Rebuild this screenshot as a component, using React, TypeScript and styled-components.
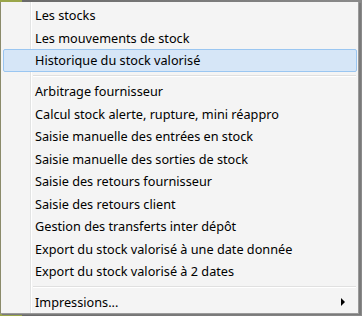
import React from 'react';
import styled, { createGlobalStyle } from 'styled-components';

const GlobalStyle = createGlobalStyle`
  html, body {
    margin: 0;
    padding: 0;
  }

  body {
    width: 362px;
    height: 316px;
    overflow: hidden;
    background: linear-gradient(to right, #9aa64a 0, #9aa64a 22px, #6a6a6a 22px, #8a8a8a 100%);
    font-family: "Noto Sans", "Open Sans", sans-serif;
  }
`;

const Backdrop = styled.div`
  padding: 2px 0 0 0;
  height: 316px;
  box-sizing: border-box;
`;

const Menu = styled.div`
  position: relative;
  width: 359px;
  height: 312px;
  box-sizing: border-box;
  background: #f4f4f4;
  border-left: 1px solid #8a8a6a;
  border-right: 1px solid #9a9a9a;
  border-bottom: 1px solid #9a9a9a;
  padding: 2px 1px 0 2px;
  box-shadow: 2px 1px 0 #7a7a7a;

  &::before {
    content: '';
    position: absolute;
    top: 0;
    bottom: 0;
    left: 29px;
    width: 1px;
    background: #e2e3e3;
    border-right: 1px solid #ffffff;
  }
`;

const Item = styled.div<{ $active?: boolean }>`
  position: relative;
  height: 22.5px;
  display: flex;
  align-items: center;
  box-sizing: border-box;
  padding-left: 31px;
  font-size: 12.7px;
  color: #000;
  white-space: nowrap;
  border: 1px solid ${(p) => (p.$active ? '#9ac6f1' : 'transparent')};
  border-radius: 2px;
  background: ${(p) => (p.$active ? '#d6e6f7' : 'transparent')};
  z-index: 1;
`;

const Separator = styled.div`
  height: 8.5px;
  display: flex;
  align-items: center;
  padding-left: 30px;
  padding-right: 1px;

  &::after {
    content: '';
    flex: 1;
    height: 1px;
    background: #e0e0e0;
    border-bottom: 1px solid #ffffff;
  }
`;

const Arrow = styled.span`
  position: absolute;
  right: 11px;
  top: 50%;
  margin-top: -4px;
  width: 0;
  height: 0;
  border-top: 4px solid transparent;
  border-bottom: 4px solid transparent;
  border-left: 4px solid #000;
`;

const firstGroup = ['Les stocks', 'Les mouvements de stock', 'Historique du stock valorisé'];

const secondGroup = [
  'Arbitrage fournisseur',
  'Calcul stock alerte, rupture, mini réappro',
  'Saisie manuelle des entrées en stock',
  'Saisie manuelle des sorties de stock',
  'Saisie des retours fournisseur',
  'Saisie des retours client',
  'Gestion des transferts inter dépôt',
  'Export du stock valorisé à une date donnée',
  'Export du stock valorisé à 2 dates',
];

const App = () => (
  <>
    <GlobalStyle />
    <Backdrop>
      <Menu>
        {firstGroup.map((label) => (
          <Item key={label} $active={label.startsWith('Historique')}>
            {label}
          </Item>
        ))}
        <Separator />
        {secondGroup.map((label) => (
          <Item key={label}>{label}</Item>
        ))}
        <Separator />
        <Item>
          Impressions...
          <Arrow />
        </Item>
      </Menu>
    </Backdrop>
  </>
);

export default App;
